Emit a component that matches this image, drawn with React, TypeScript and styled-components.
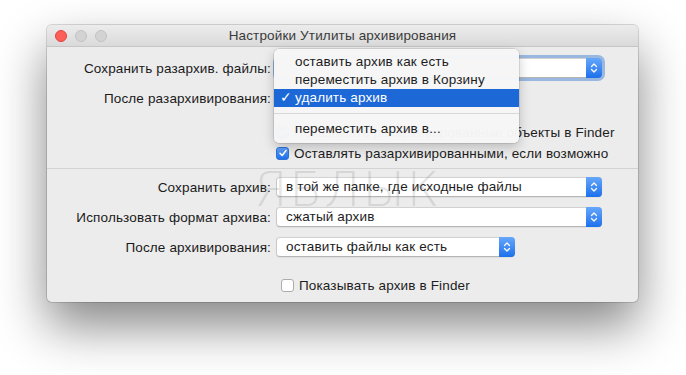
import { FC } from "react";
import styled, { createGlobalStyle } from "styled-components";

const GlobalStyle = createGlobalStyle`
  html, body {
    margin: 0;
    padding: 0;
    background: #ffffff;
  }
  body {
    font-family: "Liberation Sans", "Noto Sans", sans-serif;
    font-size: 13.5px;
    letter-spacing: 0.15px;
    color: #1d1d1d;
  }
`;

type TSelect = {
  value?: string;
  width: number;
  focused?: boolean;
};

const Stepper: FC = () => (
  <StepperBox>
    <svg width="8" height="12" viewBox="0 0 8 12">
      <path
        d="M1.5 4.5 L4 2 L6.5 4.5 M1.5 7.5 L4 10 L6.5 7.5"
        fill="none"
        stroke="#fff"
        strokeWidth="1.3"
        strokeLinecap="round"
        strokeLinejoin="round"
      />
    </svg>
  </StepperBox>
);

const Select: FC<TSelect> = ({ value, width, focused }) => (
  <SelectBox $width={width} $focused={focused}>
    <span className="value">{value}</span>
    <Stepper />
  </SelectBox>
);

type TCheck = {
  checked?: boolean;
  label: string;
};

const Check: FC<TCheck> = ({ checked, label }) => (
  <CheckRow>
    <CheckBox $checked={checked}>
      {checked && (
        <svg width="10" height="10" viewBox="0 0 10 10">
          <path
            d="M2 5.3 L4.2 7.5 L8 2.5"
            fill="none"
            stroke="#fff"
            strokeWidth="1.6"
            strokeLinecap="round"
            strokeLinejoin="round"
          />
        </svg>
      )}
    </CheckBox>
    <span>{label}</span>
  </CheckRow>
);

const menuItems = [
  { text: "оставить архив как есть" },
  { text: "переместить архив в Корзину" },
  { text: "удалить архив", active: true },
  { divider: true, text: "" },
  { text: "переместить архив в..." },
];

const App: FC = () => {
  return (
    <Page>
      <GlobalStyle />
      <Window>
        <TitleBar>
          <Lights>
            <Light $color="#fc5f57" $border="#e0443e" />
            <Light $color="#d3d3d3" $border="#c2c2c2" />
            <Light $color="#d3d3d3" $border="#c2c2c2" />
          </Lights>
          <Title>Настройки Утилиты архивирования</Title>
        </TitleBar>

        <Content>
          <Section className="top">
            <FormRow>
              <Label>Сохранить разархив. файлы:</Label>
              <Select width={326} focused />
            </FormRow>
            <FormRow className="second">
              <Label>После разархивирования:</Label>
              {/* the open popup menu covers this select */}
              <Select width={240} />
            </FormRow>
            <FormRow className="check1">
              <span />
              <Check
                checked
                label="Показывать разархивированные объекты в Finder"
              />
            </FormRow>
            <FormRow className="check2">
              <span />
              <Check
                checked
                label="Оставлять разархивированными, если возможно"
              />
            </FormRow>
          </Section>

          <Divider />

          <Section className="bottom">
            <FormRow>
              <Label>Сохранить архив:</Label>
              <Select width={326} value="в той же папке, где исходные файлы" />
            </FormRow>
            <FormRow className="spaced">
              <Label>Использовать формат архива:</Label>
              <Select width={326} value="сжатый архив" />
            </FormRow>
            <FormRow className="spaced">
              <Label>После архивирования:</Label>
              <Select width={239} value="оставить файлы как есть" />
            </FormRow>
            <FormRow className="last">
              <span />
              <CheckCenter>
                <Check label="Показывать архив в Finder" />
              </CheckCenter>
            </FormRow>
          </Section>

          <Watermark>ЯБЛЫК</Watermark>

          <Menu>
            {menuItems.map((item, i) =>
              item.divider ? (
                <MenuDivider key={i} />
              ) : (
                <MenuItem key={i} $active={item.active}>
                  <span className="tick">{item.active ? "✓" : ""}</span>
                  {item.text}
                </MenuItem>
              )
            )}
          </Menu>
        </Content>
      </Window>
    </Page>
  );
};

export default App;

const Page = styled.div`
  width: 686px;
  height: 375px;
  padding: 25px 0 0 47px;
  box-sizing: border-box;
  overflow: hidden;
`;

const Window = styled.div`
  width: 591px;
  height: 277px;
  border-radius: 5px;
  background: #ececec;
  overflow: hidden;
  box-shadow: 0 24px 50px rgba(0, 0, 0, 0.48), 0 0 0 1px rgba(0, 0, 0, 0.14);
  display: flex;
  flex-direction: column;
`;

const TitleBar = styled.div`
  position: relative;
  height: 22px;
  display: flex;
  align-items: center;
  justify-content: center;
  background: linear-gradient(#ececec, #dadada);
  border-bottom: 1px solid #c6c6c6;
  box-sizing: border-box;
`;

const Lights = styled.div`
  position: absolute;
  left: 8px;
  top: 5px;
  display: flex;
  gap: 8px;
`;

const Light = styled.div<{ $color: string; $border: string }>`
  width: 12px;
  height: 12px;
  border-radius: 50%;
  box-sizing: border-box;
  background: ${({ $color }) => $color};
  border: 1px solid ${({ $border }) => $border};
`;

const Title = styled.div`
  font-size: 13.5px;
  color: #3a3a3a;
`;

const Content = styled.div`
  position: relative;
  flex: 1;
  display: flex;
  flex-direction: column;
`;

const Section = styled.div`
  display: flex;
  flex-direction: column;
  &.top {
    padding-top: 11px;
  }
  &.top .second {
    margin-top: 10px;
  }
  &.top .check1 {
    margin-top: 16px;
  }
  &.top .check2 {
    margin-top: 5px;
  }
  &.bottom {
    padding-top: 8px;
  }
  & .spaced {
    margin-top: 10px;
  }
  & .last {
    margin-top: 20px;
  }
`;

const FormRow = styled.div`
  display: grid;
  grid-template-columns: 224px auto;
  column-gap: 5px;
  align-items: center;
`;

const Label = styled.div`
  text-align: right;
  white-space: nowrap;
  color: #1a1a1a;
`;

const SelectBox = styled.div<{ $width: number; $focused?: boolean }>`
  width: ${({ $width }) => $width}px;
  height: 20px;
  box-sizing: border-box;
  display: flex;
  align-items: stretch;
  background: #ffffff;
  border-radius: 4px;
  border: 1px solid #c9c9c9;
  border-top-color: #d2d2d2;
  border-bottom-color: #b5b5b5;
  box-shadow: ${({ $focused }) =>
    $focused
      ? "0 0 0 3px rgba(88, 142, 214, 0.55)"
      : "0 0.5px 1px rgba(0, 0, 0, 0.06)"};
  .value {
    flex: 1;
    padding-left: 9px;
    line-height: 18px;
    white-space: nowrap;
    overflow: hidden;
    color: #1d1d1d;
  }
`;

const StepperBox = styled.div`
  width: 16px;
  margin: -1px -1px -1px 0;
  border-radius: 0 4px 4px 0;
  background: linear-gradient(#66a7fb, #1d70ec);
  display: flex;
  align-items: center;
  justify-content: center;
`;

const CheckRow = styled.div`
  display: flex;
  align-items: center;
  gap: 5px;
  height: 16px;
  white-space: nowrap;
  color: #1d1d1d;
`;

const CheckCenter = styled.div`
  padding-left: 5px;
`;

const CheckBox = styled.div<{ $checked?: boolean }>`
  width: 13px;
  height: 13px;
  box-sizing: border-box;
  border-radius: 3px;
  display: flex;
  align-items: center;
  justify-content: center;
  background: ${({ $checked }) =>
    $checked ? "linear-gradient(#5fa2fa, #1f70ea)" : "#ffffff"};
  border: 1px solid ${({ $checked }) => ($checked ? "#2d72d6" : "#acacac")};
`;

const Divider = styled.div`
  margin: 7px 0 0;
  height: 1px;
  background: #d3d3d3;
`;

const Watermark = styled.div`
  position: absolute;
  left: 207px;
  top: 114px;
  font-family: "DejaVu Sans", sans-serif;
  font-weight: 200;
  font-size: 48px;
  letter-spacing: 2px;
  color: rgba(120, 120, 120, 0.2);
  pointer-events: none;
`;

const Menu = styled.div`
  position: absolute;
  left: 227px;
  top: 2px;
  width: 245px;
  padding: 4px 0 5px;
  background: rgba(246, 246, 246, 0.98);
  border-radius: 5px;
  box-shadow: 0 4px 12px rgba(0, 0, 0, 0.22), 0 0 0 0.5px rgba(0, 0, 0, 0.18);
`;

const MenuItem = styled.div<{ $active?: boolean }>`
  height: 18px;
  line-height: 18px;
  display: flex;
  align-items: center;
  white-space: nowrap;
  color: ${({ $active }) => ($active ? "#ffffff" : "#1d1d1d")};
  background: ${({ $active }) => ($active ? "#1b68d6" : "transparent")};
  .tick {
    width: 21px;
    padding-left: 6px;
    box-sizing: border-box;
  }
`;

const MenuDivider = styled.div`
  height: 1px;
  margin: 6px 0 6px;
  background: #d8d8d8;
`;
